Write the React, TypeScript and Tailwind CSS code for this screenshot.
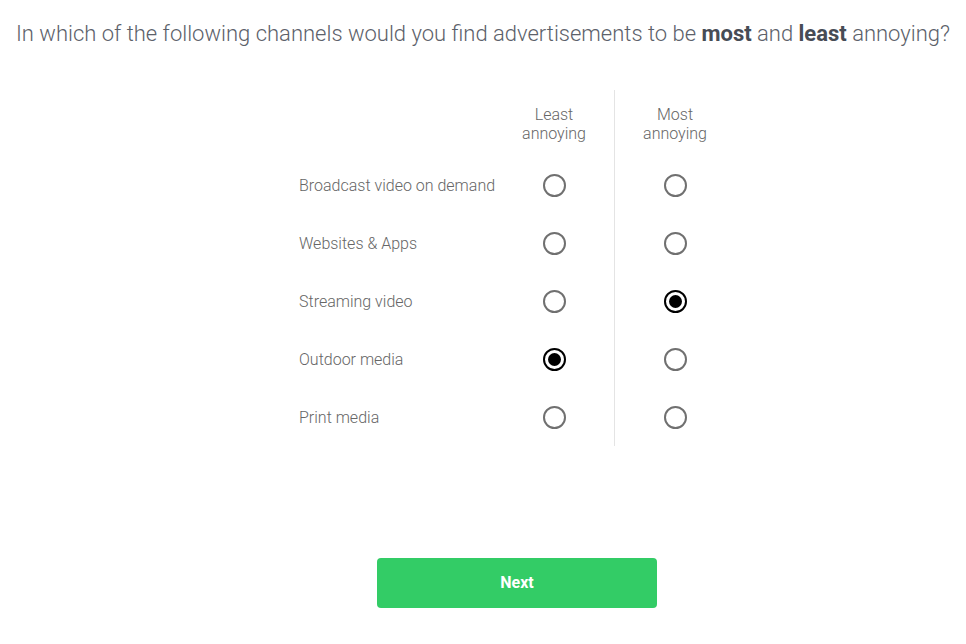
const rows = [
  { label: "Broadcast video on demand", least: false, most: false },
  { label: "Websites & Apps", least: false, most: false },
  { label: "Streaming video", least: false, most: true },
  { label: "Outdoor media", least: true, most: false },
  { label: "Print media", least: false, most: false },
];

function Radio({ checked }: { checked: boolean }) {
  return checked ? (
    <span className="flex h-[23px] w-[23px] items-center justify-center rounded-full border-2 border-black">
      <span className="h-[13px] w-[13px] rounded-full bg-black" />
    </span>
  ) : (
    <span className="block h-[23px] w-[23px] rounded-full border-2 border-[#707070]" />
  );
}

export default function App() {
  return (
    <div className="min-h-[644px] bg-white font-['Roboto',sans-serif] text-[#666]">
      {/* Question */}
      <h1 className="pt-[20px] text-center text-[22px] font-light leading-[28px] text-[#5c616a]">
        In which of the following channels would you find advertisements to be{" "}
        <b className="font-bold text-[#474c55]">most</b> and{" "}
        <b className="font-bold text-[#474c55]">least</b> annoying?
      </h1>

      <div className="ml-[299px] mt-[42px] w-[436px]">
        {/* Matrix */}
        <div className="grid grid-cols-[195px_120px_121px]">
          <div />
          <div className="flex h-[66px] flex-col items-center justify-center pt-[1px] text-center text-[16px] font-light leading-[19px] text-[#666]">
            <span>Least</span>
            <span>annoying</span>
          </div>
          <div className="flex h-[66px] flex-col items-center justify-center border-l border-[#e4e4e4] pt-[1px] text-center text-[16px] font-light leading-[19px] text-[#666]">
            <span>Most</span>
            <span>annoying</span>
          </div>

          {rows.map((row) => (
            <div key={row.label} className="contents">
              <div className="flex h-[58px] items-center whitespace-nowrap pt-[2px] text-[16px] font-light text-[#666]">
                {row.label}
              </div>
              <div className="flex h-[58px] items-center justify-center">
                <Radio checked={row.least} />
              </div>
              <div className="flex h-[58px] items-center justify-center border-l border-[#e4e4e4]">
                <Radio checked={row.most} />
              </div>
            </div>
          ))}
        </div>

        {/* Next */}
        <div className="mt-[112px] flex justify-center">
          <button className="h-[50px] w-[280px] rounded-[4px] bg-[#33cc66] text-[16px] font-bold text-white">
            Next
          </button>
        </div>
      </div>
    </div>
  );
}
